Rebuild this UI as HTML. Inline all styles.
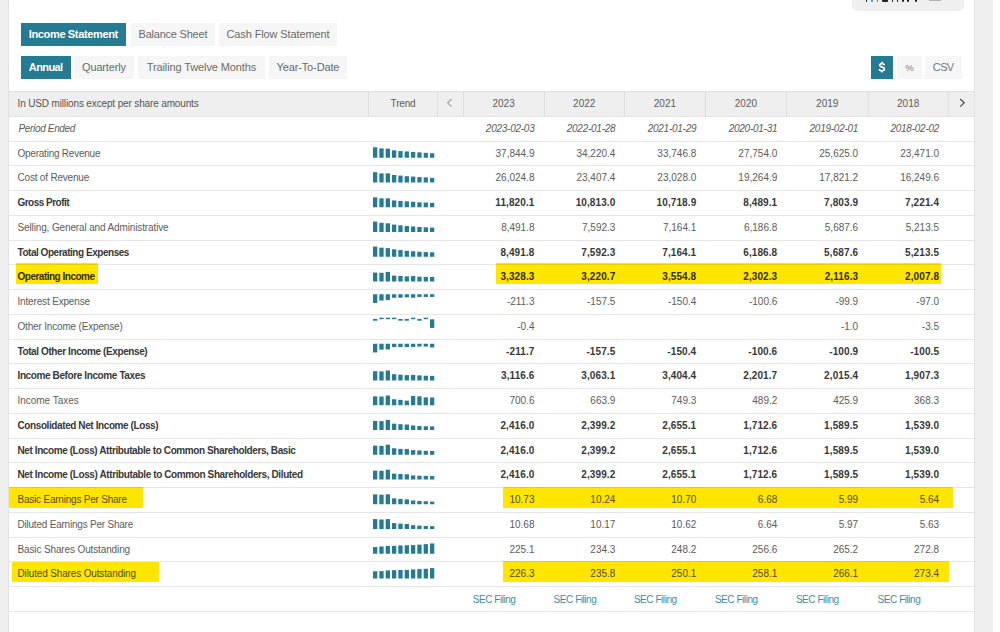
<!DOCTYPE html>
<html><head><meta charset="utf-8">
<style>
*{margin:0;padding:0;box-sizing:border-box}
html,body{width:1000px;height:632px;overflow:hidden;background:#fff}
body{position:relative;font-family:"Liberation Sans",sans-serif;color:#5c5c5c}
.a{position:absolute}
.btn{position:absolute;height:23px;background:#f6f6f6;color:#6a6a6a;font-size:11px;line-height:23px;text-align:center;letter-spacing:-0.3px;white-space:nowrap}
.btn.on{background:#257b91;color:#fff;font-weight:bold;letter-spacing:-0.2px}
.hl{position:absolute;background:#ffe500}
.ol{color:#554c00}
.ol.b{color:#332e00}
.line{position:absolute;left:8px;width:966px;height:1px;background:rgba(0,0,0,0.098)}
.t{position:absolute;font-size:10px;line-height:12px;white-space:nowrap;letter-spacing:-0.2px}
.b{letter-spacing:-0.42px}
.r{letter-spacing:0}
.b.r{letter-spacing:0.1px}
.it{font-style:italic;letter-spacing:-0.25px}
.b{font-weight:bold;color:#383838}
.r{text-align:right}
.vd{position:absolute;width:1px;background:#dedede;top:92px;height:24px}
</style></head><body>

<div class="a" style="left:0;top:0;width:8px;height:632px;background:#efefef"></div>
<div class="a" style="left:8px;top:0;width:1px;height:632px;background:#e3e3e3;z-index:5"></div>
<div class="a" style="left:974px;top:0;width:19px;height:632px;background:#efefef"></div>
<div class="a" style="left:974px;top:0;width:1px;height:632px;background:#e2e2e2;z-index:5"></div>
<div class="a" style="left:852px;top:-10px;width:112px;height:20.5px;background:#efefef;border-radius:5px"></div>
<div class="a" style="left:865.5px;top:0;width:1.5px;height:1.6px;background:#222;border-radius:0 0 1px 1px"></div>
<div class="a" style="left:870.8px;top:0;width:1.8px;height:1.6px;background:#2a9de0;border-radius:0 0 1px 1px"></div>
<div class="a" style="left:876.7px;top:0;width:1.5px;height:1.6px;background:#2a9de0;border-radius:0 0 1px 1px"></div>
<div class="a" style="left:881.8px;top:0;width:5.8px;height:1.6px;background:#222;border-radius:0 0 1px 1px"></div>
<div class="a" style="left:891.7px;top:0;width:1.5px;height:1.6px;background:#222;border-radius:0 0 1px 1px"></div>
<div class="a" style="left:896.9px;top:0;width:1.5px;height:1.6px;background:#222;border-radius:0 0 1px 1px"></div>
<div class="a" style="left:902px;top:0;width:1.5px;height:1.6px;background:#222;border-radius:0 0 1px 1px"></div>
<div class="a" style="left:907.3px;top:0;width:1.5px;height:1.6px;background:#222;border-radius:0 0 1px 1px"></div>
<div class="a" style="left:915.3px;top:0;width:1.5px;height:1.6px;background:#222;border-radius:0 0 1px 1px"></div>
<div class="a" style="left:929px;top:0;width:12.3px;height:1px;background:#b0b0b0"></div>
<div class="btn on" style="left:21px;top:23px;width:105px;letter-spacing:-0.347px;text-indent:-0.347px;">Income Statement</div>
<div class="btn" style="left:131px;top:23px;width:84px;letter-spacing:-0.217px;text-indent:-0.217px;">Balance Sheet</div>
<div class="btn" style="left:219px;top:23px;width:118px;letter-spacing:-0.122px;text-indent:-0.122px;">Cash Flow Statement</div>
<div class="btn on" style="left:21px;top:56px;width:50px;letter-spacing:-0.6px;text-indent:-0.6px;">Annual</div>
<div class="btn" style="left:74px;top:56px;width:60px;letter-spacing:-0.175px;text-indent:-0.175px;">Quarterly</div>
<div class="btn" style="left:138px;top:56px;width:127px;letter-spacing:-0.11px;text-indent:-0.11px;">Trailing Twelve Months</div>
<div class="btn" style="left:269px;top:56px;width:78px;letter-spacing:-0.136px;text-indent:-0.136px;">Year-To-Date</div>
<div class="btn on" style="left:871px;top:56px;width:22px;letter-spacing:0px;text-indent:0px;"></div>
<div class="btn" style="left:897px;top:56px;width:25px;letter-spacing:0px;text-indent:0px;font-size:9.5px;color:#808080;">%</div>
<div class="btn" style="left:925px;top:56px;width:37px;letter-spacing:-0.6px;text-indent:-0.6px;color:#787878;">CSV</div>
<svg class="a" style="left:0;top:0" width="1000" height="100"><path d="M884.3 65.3C884.3 64.2 883.4 63.6 882 63.6C880.6 63.6 879.7 64.3 879.7 65.3C879.7 66.4 880.6 66.8 882 67.1C883.5 67.4 884.5 67.9 884.5 69.1C884.5 70.2 883.5 70.8 882 70.8C880.4 70.8 879.4 70.1 879.4 68.9M882 61.8V63.6M882 70.8V72.4" fill="none" stroke="#fff" stroke-width="1.6"/></svg>
<div class="a" style="left:8px;top:91px;width:966px;height:26px;background:#efefef;border-top:1px solid #e0e0e0;border-bottom:1px solid #e3e3e3"></div>
<div class="vd" style="left:368.3px"></div>
<div class="vd" style="left:437.2px"></div>
<div class="vd" style="left:463.2px"></div>
<div class="vd" style="left:544.1px"></div>
<div class="vd" style="left:624.4px"></div>
<div class="vd" style="left:705.4px"></div>
<div class="vd" style="left:786.4px"></div>
<div class="vd" style="left:868.1px"></div>
<div class="vd" style="left:948.2px"></div>
<div class="t" style="left:17.5px;top:97.5px;color:#555;letter-spacing:-0.141px">In USD millions except per share amounts</div>
<div class="t" style="left:368px;width:70px;text-align:center;top:97.5px">Trend</div>
<div class="t" style="left:463.2px;width:80.9px;text-align:center;top:97.5px;letter-spacing:0">2023</div>
<div class="t" style="left:544.1px;width:80.3px;text-align:center;top:97.5px;letter-spacing:0">2022</div>
<div class="t" style="left:624.4px;width:81.0px;text-align:center;top:97.5px;letter-spacing:0">2021</div>
<div class="t" style="left:705.4px;width:81.0px;text-align:center;top:97.5px;letter-spacing:0">2020</div>
<div class="t" style="left:786.4px;width:81.7px;text-align:center;top:97.5px;letter-spacing:0">2019</div>
<div class="t" style="left:868.1px;width:80.1px;text-align:center;top:97.5px;letter-spacing:0">2018</div>
<svg class="a" style="left:0;top:0" width="1000" height="632"><polyline points="451.6,99 447.6,102.8 451.6,106.6" fill="none" stroke="#a0a0a0" stroke-width="1.15"/><polyline points="960.2,99 964.2,102.8 960.2,106.6" fill="none" stroke="#4a4a4a" stroke-width="1.2"/></svg>
<div class="hl" style="left:16px;top:263px;width:82px;height:21px"></div>
<div class="hl" style="left:496px;top:263px;width:445px;height:21px"></div>
<div class="hl" style="left:9px;top:487px;width:134px;height:21px"></div>
<div class="hl" style="left:503px;top:487px;width:450px;height:21px"></div>
<div class="hl" style="left:12px;top:562px;width:147px;height:20px"></div>
<div class="hl" style="left:503px;top:561px;width:446px;height:21px"></div>
<div class="t it" style="left:18.5px;top:123.30px;letter-spacing:-0.341px">Period Ended</div>
<div class="t it r" style="left:454.5px;width:80px;top:123.30px;">2023-02-03</div>
<div class="t it r" style="left:535.4px;width:80px;top:123.30px;">2022-01-28</div>
<div class="t it r" style="left:616.3px;width:80px;top:123.30px;">2021-01-29</div>
<div class="t it r" style="left:697.3px;width:80px;top:123.30px;">2020-01-31</div>
<div class="t it r" style="left:778.2px;width:80px;top:123.30px;">2019-02-01</div>
<div class="t it r" style="left:859.1px;width:80px;top:123.30px;">2018-02-02</div>
<div class="line" style="top:141px"></div>
<div class="t" style="left:17.5px;top:148.30px;letter-spacing:-0.234px">Operating Revenue</div>
<div class="t r" style="left:454.5px;width:80px;top:148.30px;">37,844.9</div>
<div class="t r" style="left:535.4px;width:80px;top:148.30px;">34,220.4</div>
<div class="t r" style="left:616.3px;width:80px;top:148.30px;">33,746.8</div>
<div class="t r" style="left:697.3px;width:80px;top:148.30px;">27,754.0</div>
<div class="t r" style="left:778.2px;width:80px;top:148.30px;">25,625.0</div>
<div class="t r" style="left:859.1px;width:80px;top:148.30px;">23,471.0</div>
<div class="line" style="top:165px"></div>
<div class="t" style="left:17.5px;top:172.30px;letter-spacing:-0.196px">Cost of Revenue</div>
<div class="t r" style="left:454.5px;width:80px;top:172.30px;">26,024.8</div>
<div class="t r" style="left:535.4px;width:80px;top:172.30px;">23,407.4</div>
<div class="t r" style="left:616.3px;width:80px;top:172.30px;">23,028.0</div>
<div class="t r" style="left:697.3px;width:80px;top:172.30px;">19,264.9</div>
<div class="t r" style="left:778.2px;width:80px;top:172.30px;">17,821.2</div>
<div class="t r" style="left:859.1px;width:80px;top:172.30px;">16,249.6</div>
<div class="line" style="top:190px"></div>
<div class="t b" style="left:17.5px;top:197.30px;letter-spacing:-0.523px">Gross Profit</div>
<div class="t b r" style="left:454.5px;width:80px;top:197.30px;">11,820.1</div>
<div class="t b r" style="left:535.4px;width:80px;top:197.30px;">10,813.0</div>
<div class="t b r" style="left:616.3px;width:80px;top:197.30px;">10,718.9</div>
<div class="t b r" style="left:697.3px;width:80px;top:197.30px;">8,489.1</div>
<div class="t b r" style="left:778.2px;width:80px;top:197.30px;">7,803.9</div>
<div class="t b r" style="left:859.1px;width:80px;top:197.30px;">7,221.4</div>
<div class="line" style="top:215px"></div>
<div class="t" style="left:17.5px;top:222.30px;letter-spacing:-0.132px">Selling, General and Administrative</div>
<div class="t r" style="left:454.5px;width:80px;top:222.30px;">8,491.8</div>
<div class="t r" style="left:535.4px;width:80px;top:222.30px;">7,592.3</div>
<div class="t r" style="left:616.3px;width:80px;top:222.30px;">7,164.1</div>
<div class="t r" style="left:697.3px;width:80px;top:222.30px;">6,186.8</div>
<div class="t r" style="left:778.2px;width:80px;top:222.30px;">5,687.6</div>
<div class="t r" style="left:859.1px;width:80px;top:222.30px;">5,213.5</div>
<div class="line" style="top:240px"></div>
<div class="t b" style="left:17.5px;top:247.30px;letter-spacing:-0.467px">Total Operating Expenses</div>
<div class="t b r" style="left:454.5px;width:80px;top:247.30px;">8,491.8</div>
<div class="t b r" style="left:535.4px;width:80px;top:247.30px;">7,592.3</div>
<div class="t b r" style="left:616.3px;width:80px;top:247.30px;">7,164.1</div>
<div class="t b r" style="left:697.3px;width:80px;top:247.30px;">6,186.8</div>
<div class="t b r" style="left:778.2px;width:80px;top:247.30px;">5,687.6</div>
<div class="t b r" style="left:859.1px;width:80px;top:247.30px;">5,213.5</div>
<div class="line" style="top:264px"></div>
<div class="t ol b" style="left:17.5px;top:271.30px;letter-spacing:-0.5px">Operating Income</div>
<div class="t ol b r" style="left:454.5px;width:80px;top:271.30px;">3,328.3</div>
<div class="t ol b r" style="left:535.4px;width:80px;top:271.30px;">3,220.7</div>
<div class="t ol b r" style="left:616.3px;width:80px;top:271.30px;">3,554.8</div>
<div class="t ol b r" style="left:697.3px;width:80px;top:271.30px;">2,302.3</div>
<div class="t ol b r" style="left:778.2px;width:80px;top:271.30px;">2,116.3</div>
<div class="t ol b r" style="left:859.1px;width:80px;top:271.30px;">2,007.8</div>
<div class="line" style="top:289px"></div>
<div class="t" style="left:17.5px;top:296.30px;letter-spacing:-0.167px">Interest Expense</div>
<div class="t r" style="left:454.5px;width:80px;top:296.30px;">-211.3</div>
<div class="t r" style="left:535.4px;width:80px;top:296.30px;">-157.5</div>
<div class="t r" style="left:616.3px;width:80px;top:296.30px;">-150.4</div>
<div class="t r" style="left:697.3px;width:80px;top:296.30px;">-100.6</div>
<div class="t r" style="left:778.2px;width:80px;top:296.30px;">-99.9</div>
<div class="t r" style="left:859.1px;width:80px;top:296.30px;">-97.0</div>
<div class="line" style="top:314px"></div>
<div class="t" style="left:17.5px;top:321.30px;letter-spacing:-0.176px">Other Income (Expense)</div>
<div class="t r" style="left:454.5px;width:80px;top:321.30px;">-0.4</div>
<div class="t r" style="left:535.4px;width:80px;top:321.30px;"></div>
<div class="t r" style="left:616.3px;width:80px;top:321.30px;"></div>
<div class="t r" style="left:697.3px;width:80px;top:321.30px;"></div>
<div class="t r" style="left:778.2px;width:80px;top:321.30px;">-1.0</div>
<div class="t r" style="left:859.1px;width:80px;top:321.30px;">-3.5</div>
<div class="line" style="top:339px"></div>
<div class="t b" style="left:17.5px;top:346.30px;letter-spacing:-0.4px">Total Other Income (Expense)</div>
<div class="t b r" style="left:454.5px;width:80px;top:346.30px;">-211.7</div>
<div class="t b r" style="left:535.4px;width:80px;top:346.30px;">-157.5</div>
<div class="t b r" style="left:616.3px;width:80px;top:346.30px;">-150.4</div>
<div class="t b r" style="left:697.3px;width:80px;top:346.30px;">-100.6</div>
<div class="t b r" style="left:778.2px;width:80px;top:346.30px;">-100.9</div>
<div class="t b r" style="left:859.1px;width:80px;top:346.30px;">-100.5</div>
<div class="line" style="top:363px"></div>
<div class="t b" style="left:17.5px;top:370.30px;letter-spacing:-0.388px">Income Before Income Taxes</div>
<div class="t b r" style="left:454.5px;width:80px;top:370.30px;">3,116.6</div>
<div class="t b r" style="left:535.4px;width:80px;top:370.30px;">3,063.1</div>
<div class="t b r" style="left:616.3px;width:80px;top:370.30px;">3,404.4</div>
<div class="t b r" style="left:697.3px;width:80px;top:370.30px;">2,201.7</div>
<div class="t b r" style="left:778.2px;width:80px;top:370.30px;">2,015.4</div>
<div class="t b r" style="left:859.1px;width:80px;top:370.30px;">1,907.3</div>
<div class="line" style="top:388px"></div>
<div class="t" style="left:17.5px;top:395.30px;letter-spacing:-0.027px">Income Taxes</div>
<div class="t r" style="left:454.5px;width:80px;top:395.30px;">700.6</div>
<div class="t r" style="left:535.4px;width:80px;top:395.30px;">663.9</div>
<div class="t r" style="left:616.3px;width:80px;top:395.30px;">749.3</div>
<div class="t r" style="left:697.3px;width:80px;top:395.30px;">489.2</div>
<div class="t r" style="left:778.2px;width:80px;top:395.30px;">425.9</div>
<div class="t r" style="left:859.1px;width:80px;top:395.30px;">368.3</div>
<div class="line" style="top:413px"></div>
<div class="t b" style="left:17.5px;top:420.30px;letter-spacing:-0.403px">Consolidated Net Income (Loss)</div>
<div class="t b r" style="left:454.5px;width:80px;top:420.30px;">2,416.0</div>
<div class="t b r" style="left:535.4px;width:80px;top:420.30px;">2,399.2</div>
<div class="t b r" style="left:616.3px;width:80px;top:420.30px;">2,655.1</div>
<div class="t b r" style="left:697.3px;width:80px;top:420.30px;">1,712.6</div>
<div class="t b r" style="left:778.2px;width:80px;top:420.30px;">1,589.5</div>
<div class="t b r" style="left:859.1px;width:80px;top:420.30px;">1,539.0</div>
<div class="line" style="top:438px"></div>
<div class="t b" style="left:17.5px;top:445.30px;letter-spacing:-0.408px">Net Income (Loss) Attributable to Common Shareholders, Basic</div>
<div class="t b r" style="left:454.5px;width:80px;top:445.30px;">2,416.0</div>
<div class="t b r" style="left:535.4px;width:80px;top:445.30px;">2,399.2</div>
<div class="t b r" style="left:616.3px;width:80px;top:445.30px;">2,655.1</div>
<div class="t b r" style="left:697.3px;width:80px;top:445.30px;">1,712.6</div>
<div class="t b r" style="left:778.2px;width:80px;top:445.30px;">1,589.5</div>
<div class="t b r" style="left:859.1px;width:80px;top:445.30px;">1,539.0</div>
<div class="line" style="top:462px"></div>
<div class="t b" style="left:17.5px;top:469.30px;letter-spacing:-0.395px">Net Income (Loss) Attributable to Common Shareholders, Diluted</div>
<div class="t b r" style="left:454.5px;width:80px;top:469.30px;">2,416.0</div>
<div class="t b r" style="left:535.4px;width:80px;top:469.30px;">2,399.2</div>
<div class="t b r" style="left:616.3px;width:80px;top:469.30px;">2,655.1</div>
<div class="t b r" style="left:697.3px;width:80px;top:469.30px;">1,712.6</div>
<div class="t b r" style="left:778.2px;width:80px;top:469.30px;">1,589.5</div>
<div class="t b r" style="left:859.1px;width:80px;top:469.30px;">1,539.0</div>
<div class="line" style="top:487px"></div>
<div class="t ol" style="left:17.5px;top:494.30px;letter-spacing:-0.217px">Basic Earnings Per Share</div>
<div class="t ol r" style="left:454.5px;width:80px;top:494.30px;">10.73</div>
<div class="t ol r" style="left:535.4px;width:80px;top:494.30px;">10.24</div>
<div class="t ol r" style="left:616.3px;width:80px;top:494.30px;">10.70</div>
<div class="t ol r" style="left:697.3px;width:80px;top:494.30px;">6.68</div>
<div class="t ol r" style="left:778.2px;width:80px;top:494.30px;">5.99</div>
<div class="t ol r" style="left:859.1px;width:80px;top:494.30px;">5.64</div>
<div class="line" style="top:512px"></div>
<div class="t" style="left:17.5px;top:519.30px;letter-spacing:-0.216px">Diluted Earnings Per Share</div>
<div class="t r" style="left:454.5px;width:80px;top:519.30px;">10.68</div>
<div class="t r" style="left:535.4px;width:80px;top:519.30px;">10.17</div>
<div class="t r" style="left:616.3px;width:80px;top:519.30px;">10.62</div>
<div class="t r" style="left:697.3px;width:80px;top:519.30px;">6.64</div>
<div class="t r" style="left:778.2px;width:80px;top:519.30px;">5.97</div>
<div class="t r" style="left:859.1px;width:80px;top:519.30px;">5.63</div>
<div class="line" style="top:537px"></div>
<div class="t" style="left:17.5px;top:544.30px;letter-spacing:-0.13px">Basic Shares Outstanding</div>
<div class="t r" style="left:454.5px;width:80px;top:544.30px;">225.1</div>
<div class="t r" style="left:535.4px;width:80px;top:544.30px;">234.3</div>
<div class="t r" style="left:616.3px;width:80px;top:544.30px;">248.2</div>
<div class="t r" style="left:697.3px;width:80px;top:544.30px;">256.6</div>
<div class="t r" style="left:778.2px;width:80px;top:544.30px;">265.2</div>
<div class="t r" style="left:859.1px;width:80px;top:544.30px;">272.8</div>
<div class="line" style="top:561px"></div>
<div class="t ol" style="left:17.5px;top:568.30px;letter-spacing:-0.148px">Diluted Shares Outstanding</div>
<div class="t ol r" style="left:454.5px;width:80px;top:568.30px;">226.3</div>
<div class="t ol r" style="left:535.4px;width:80px;top:568.30px;">235.8</div>
<div class="t ol r" style="left:616.3px;width:80px;top:568.30px;">250.1</div>
<div class="t ol r" style="left:697.3px;width:80px;top:568.30px;">258.1</div>
<div class="t ol r" style="left:778.2px;width:80px;top:568.30px;">266.1</div>
<div class="t ol r" style="left:859.1px;width:80px;top:568.30px;">273.4</div>
<div class="line" style="top:586px"></div>
<div class="line" style="top:611px"></div>
<div class="t" style="left:472.7px;top:594.00px;color:#3f8ca2;letter-spacing:-0.45px">SEC Filing</div>
<div class="t" style="left:553.6px;top:594.00px;color:#3f8ca2;letter-spacing:-0.45px">SEC Filing</div>
<div class="t" style="left:633.9px;top:594.00px;color:#3f8ca2;letter-spacing:-0.45px">SEC Filing</div>
<div class="t" style="left:714.9px;top:594.00px;color:#3f8ca2;letter-spacing:-0.45px">SEC Filing</div>
<div class="t" style="left:795.9px;top:594.00px;color:#3f8ca2;letter-spacing:-0.45px">SEC Filing</div>
<div class="t" style="left:877.6px;top:594.00px;color:#3f8ca2;letter-spacing:-0.45px">SEC Filing</div>
<svg class="a" style="left:0;top:0" width="1000" height="632" fill="#257b91"><rect x="373.00" y="147.25" width="4.30" height="10.50"/><rect x="379.33" y="148.35" width="4.30" height="9.40"/><rect x="385.66" y="148.65" width="4.30" height="9.10"/><rect x="391.99" y="150.35" width="4.30" height="7.40"/><rect x="398.32" y="151.05" width="4.30" height="6.70"/><rect x="404.65" y="151.45" width="4.30" height="6.30"/><rect x="410.98" y="151.95" width="4.30" height="5.80"/><rect x="417.31" y="152.35" width="4.30" height="5.40"/><rect x="423.64" y="152.85" width="4.30" height="4.90"/><rect x="429.97" y="153.25" width="4.30" height="4.50"/><rect x="373.00" y="172.20" width="4.30" height="10.30"/><rect x="379.33" y="173.40" width="4.30" height="9.10"/><rect x="385.66" y="173.40" width="4.30" height="9.10"/><rect x="391.99" y="175.00" width="4.30" height="7.50"/><rect x="398.32" y="175.60" width="4.30" height="6.90"/><rect x="404.65" y="176.20" width="4.30" height="6.30"/><rect x="410.98" y="176.60" width="4.30" height="5.90"/><rect x="417.31" y="177.10" width="4.30" height="5.40"/><rect x="423.64" y="177.40" width="4.30" height="5.10"/><rect x="429.97" y="177.90" width="4.30" height="4.60"/><rect x="373.00" y="197.35" width="4.30" height="9.90"/><rect x="379.33" y="198.35" width="4.30" height="8.90"/><rect x="385.66" y="198.35" width="4.30" height="8.90"/><rect x="391.99" y="200.45" width="4.30" height="6.80"/><rect x="398.32" y="200.95" width="4.30" height="6.30"/><rect x="404.65" y="201.35" width="4.30" height="5.90"/><rect x="410.98" y="201.75" width="4.30" height="5.50"/><rect x="417.31" y="202.35" width="4.30" height="4.90"/><rect x="423.64" y="202.55" width="4.30" height="4.70"/><rect x="429.97" y="202.85" width="4.30" height="4.40"/><rect x="373.00" y="221.60" width="4.30" height="10.40"/><rect x="379.33" y="222.80" width="4.30" height="9.20"/><rect x="385.66" y="223.30" width="4.30" height="8.70"/><rect x="391.99" y="224.60" width="4.30" height="7.40"/><rect x="398.32" y="225.30" width="4.30" height="6.70"/><rect x="404.65" y="226.00" width="4.30" height="6.00"/><rect x="410.98" y="226.50" width="4.30" height="5.50"/><rect x="417.31" y="227.00" width="4.30" height="5.00"/><rect x="423.64" y="227.30" width="4.30" height="4.70"/><rect x="429.97" y="227.60" width="4.30" height="4.40"/><rect x="373.00" y="246.55" width="4.30" height="10.20"/><rect x="379.33" y="247.65" width="4.30" height="9.10"/><rect x="385.66" y="248.15" width="4.30" height="8.60"/><rect x="391.99" y="249.35" width="4.30" height="7.40"/><rect x="398.32" y="250.05" width="4.30" height="6.70"/><rect x="404.65" y="250.75" width="4.30" height="6.00"/><rect x="410.98" y="251.25" width="4.30" height="5.50"/><rect x="417.31" y="251.75" width="4.30" height="5.00"/><rect x="423.64" y="252.05" width="4.30" height="4.70"/><rect x="429.97" y="252.35" width="4.30" height="4.40"/><rect x="373.00" y="272.60" width="4.30" height="8.90"/><rect x="379.33" y="272.80" width="4.30" height="8.70"/><rect x="385.66" y="271.90" width="4.30" height="9.60"/><rect x="391.99" y="275.60" width="4.30" height="5.90"/><rect x="398.32" y="276.00" width="4.30" height="5.50"/><rect x="404.65" y="276.40" width="4.30" height="5.10"/><rect x="410.98" y="276.10" width="4.30" height="5.40"/><rect x="417.31" y="276.70" width="4.30" height="4.80"/><rect x="423.64" y="276.90" width="4.30" height="4.60"/><rect x="429.97" y="276.90" width="4.30" height="4.60"/><rect x="373.00" y="294.25" width="4.30" height="8.70"/><rect x="379.33" y="294.25" width="4.30" height="6.30"/><rect x="385.66" y="294.25" width="4.30" height="5.90"/><rect x="391.99" y="294.25" width="4.30" height="3.50"/><rect x="398.32" y="294.25" width="4.30" height="3.50"/><rect x="404.65" y="294.25" width="4.30" height="3.10"/><rect x="410.98" y="294.25" width="4.30" height="3.50"/><rect x="417.31" y="294.25" width="4.30" height="2.70"/><rect x="423.64" y="294.25" width="4.30" height="2.70"/><rect x="429.97" y="294.25" width="4.30" height="2.70"/><rect x="373.00" y="318.90" width="4.30" height="1.80"/><rect x="379.33" y="317.70" width="4.30" height="1.50"/><rect x="385.66" y="317.70" width="4.30" height="1.50"/><rect x="391.99" y="317.70" width="4.30" height="1.50"/><rect x="398.32" y="318.90" width="4.30" height="1.80"/><rect x="404.65" y="318.90" width="4.30" height="1.80"/><rect x="410.98" y="317.70" width="4.30" height="1.50"/><rect x="417.31" y="318.90" width="4.30" height="1.80"/><rect x="423.64" y="317.70" width="4.30" height="1.50"/><rect x="429.97" y="319.30" width="4.30" height="8.60"/><rect x="373.00" y="343.75" width="4.30" height="8.70"/><rect x="379.33" y="343.75" width="4.30" height="5.90"/><rect x="385.66" y="343.75" width="4.30" height="5.70"/><rect x="391.99" y="343.75" width="4.30" height="3.20"/><rect x="398.32" y="343.75" width="4.30" height="3.30"/><rect x="404.65" y="343.75" width="4.30" height="3.30"/><rect x="410.98" y="343.75" width="4.30" height="3.20"/><rect x="417.31" y="343.75" width="4.30" height="2.80"/><rect x="423.64" y="343.75" width="4.30" height="2.80"/><rect x="429.97" y="343.75" width="4.30" height="3.70"/><rect x="373.00" y="371.20" width="4.30" height="9.30"/><rect x="379.33" y="371.40" width="4.30" height="9.10"/><rect x="385.66" y="370.50" width="4.30" height="10.00"/><rect x="391.99" y="374.20" width="4.30" height="6.30"/><rect x="398.32" y="374.70" width="4.30" height="5.80"/><rect x="404.65" y="375.10" width="4.30" height="5.40"/><rect x="410.98" y="374.90" width="4.30" height="5.60"/><rect x="417.31" y="375.40" width="4.30" height="5.10"/><rect x="423.64" y="375.70" width="4.30" height="4.80"/><rect x="429.97" y="375.90" width="4.30" height="4.60"/><rect x="373.00" y="396.35" width="4.30" height="8.90"/><rect x="379.33" y="396.55" width="4.30" height="8.70"/><rect x="385.66" y="395.55" width="4.30" height="9.70"/><rect x="391.99" y="399.25" width="4.30" height="6.00"/><rect x="398.32" y="399.85" width="4.30" height="5.40"/><rect x="404.65" y="400.65" width="4.30" height="4.60"/><rect x="410.98" y="395.95" width="4.30" height="9.30"/><rect x="417.31" y="396.35" width="4.30" height="8.90"/><rect x="423.64" y="397.35" width="4.30" height="7.90"/><rect x="429.97" y="397.50" width="4.30" height="7.75"/><rect x="373.00" y="420.90" width="4.30" height="9.10"/><rect x="379.33" y="421.10" width="4.30" height="8.90"/><rect x="385.66" y="419.90" width="4.30" height="10.10"/><rect x="391.99" y="423.70" width="4.30" height="6.30"/><rect x="398.32" y="424.20" width="4.30" height="5.80"/><rect x="404.65" y="424.50" width="4.30" height="5.50"/><rect x="410.98" y="425.50" width="4.30" height="4.50"/><rect x="417.31" y="426.00" width="4.30" height="4.00"/><rect x="423.64" y="426.30" width="4.30" height="3.70"/><rect x="429.97" y="426.40" width="4.30" height="3.60"/><rect x="373.00" y="445.65" width="4.30" height="9.10"/><rect x="379.33" y="445.85" width="4.30" height="8.90"/><rect x="385.66" y="444.65" width="4.30" height="10.10"/><rect x="391.99" y="448.25" width="4.30" height="6.50"/><rect x="398.32" y="448.85" width="4.30" height="5.90"/><rect x="404.65" y="449.05" width="4.30" height="5.70"/><rect x="410.98" y="450.15" width="4.30" height="4.60"/><rect x="417.31" y="450.45" width="4.30" height="4.30"/><rect x="423.64" y="450.85" width="4.30" height="3.90"/><rect x="429.97" y="450.95" width="4.30" height="3.80"/><rect x="373.00" y="470.60" width="4.30" height="8.90"/><rect x="379.33" y="470.80" width="4.30" height="8.70"/><rect x="385.66" y="469.70" width="4.30" height="9.80"/><rect x="391.99" y="473.60" width="4.30" height="5.90"/><rect x="398.32" y="474.00" width="4.30" height="5.50"/><rect x="404.65" y="474.30" width="4.30" height="5.20"/><rect x="410.98" y="475.40" width="4.30" height="4.10"/><rect x="417.31" y="475.70" width="4.30" height="3.80"/><rect x="423.64" y="475.90" width="4.30" height="3.60"/><rect x="429.97" y="476.10" width="4.30" height="3.40"/><rect x="373.00" y="494.35" width="4.30" height="9.90"/><rect x="379.33" y="494.75" width="4.30" height="9.50"/><rect x="385.66" y="494.35" width="4.30" height="9.90"/><rect x="391.99" y="498.35" width="4.30" height="5.90"/><rect x="398.32" y="498.85" width="4.30" height="5.40"/><rect x="404.65" y="499.35" width="4.30" height="4.90"/><rect x="410.98" y="500.45" width="4.30" height="3.80"/><rect x="417.31" y="500.95" width="4.30" height="3.30"/><rect x="423.64" y="501.25" width="4.30" height="3.00"/><rect x="429.97" y="501.65" width="4.30" height="2.60"/><rect x="373.00" y="519.10" width="4.30" height="9.90"/><rect x="379.33" y="519.50" width="4.30" height="9.50"/><rect x="385.66" y="519.10" width="4.30" height="9.90"/><rect x="391.99" y="523.10" width="4.30" height="5.90"/><rect x="398.32" y="523.60" width="4.30" height="5.40"/><rect x="404.65" y="524.00" width="4.30" height="5.00"/><rect x="410.98" y="525.20" width="4.30" height="3.80"/><rect x="417.31" y="525.60" width="4.30" height="3.40"/><rect x="423.64" y="526.00" width="4.30" height="3.00"/><rect x="429.97" y="526.20" width="4.30" height="2.80"/><rect x="373.00" y="547.05" width="4.30" height="6.70"/><rect x="379.33" y="546.45" width="4.30" height="7.30"/><rect x="385.66" y="545.95" width="4.30" height="7.80"/><rect x="391.99" y="545.85" width="4.30" height="7.90"/><rect x="398.32" y="545.45" width="4.30" height="8.30"/><rect x="404.65" y="545.25" width="4.30" height="8.50"/><rect x="410.98" y="545.05" width="4.30" height="8.70"/><rect x="417.31" y="544.65" width="4.30" height="9.10"/><rect x="423.64" y="544.15" width="4.30" height="9.60"/><rect x="429.97" y="543.45" width="4.30" height="10.30"/><rect x="373.00" y="571.30" width="4.30" height="7.20"/><rect x="379.33" y="571.10" width="4.30" height="7.40"/><rect x="385.66" y="570.40" width="4.30" height="8.10"/><rect x="391.99" y="570.20" width="4.30" height="8.30"/><rect x="398.32" y="570.00" width="4.30" height="8.50"/><rect x="404.65" y="569.90" width="4.30" height="8.60"/><rect x="410.98" y="569.40" width="4.30" height="9.10"/><rect x="417.31" y="569.10" width="4.30" height="9.40"/><rect x="423.64" y="568.80" width="4.30" height="9.70"/><rect x="429.97" y="568.10" width="4.30" height="10.40"/></svg>
</body></html>
